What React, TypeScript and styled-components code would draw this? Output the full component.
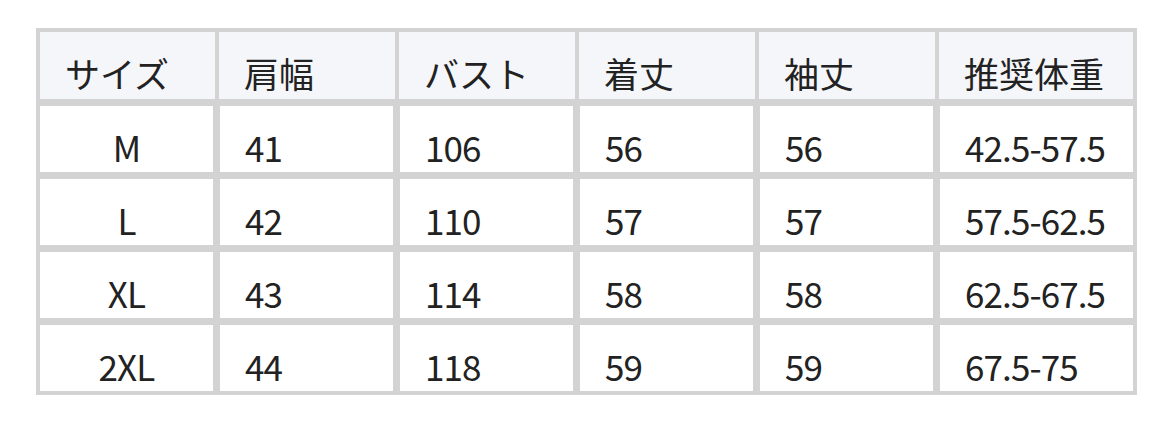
import React from 'react';
import styled, { createGlobalStyle } from 'styled-components';

const GlobalStyle = createGlobalStyle`
  html, body {
    margin: 0;
    padding: 0;
    background: #ffffff;
  }
  body {
    font-family: "Noto Sans CJK JP", "Noto Sans", sans-serif;
  }
`;

const Page = styled.div`
  padding: 28px 0 0 36px;
`;

const Table = styled.div`
  display: grid;
  grid-template-columns: repeat(5, 173px) 193px;
  grid-auto-rows: 66px;
  grid-template-rows: 67px;
  gap: 7px;
  padding: 4px;
  width: fit-content;
  background: #d3d3d3;
`;

const Cell = styled.div<{ $head?: boolean; $center?: boolean }>`
  padding: 16px 25px 0;
  font-size: 35px;
  line-height: 50px;
  color: #222222;
  white-space: nowrap;
  letter-spacing: ${p => (p.$head ? '0' : '-0.9px')};
  text-align: ${p => (p.$center ? 'center' : 'left')};
  background: ${p => (p.$head ? '#f5f6fa' : '#ffffff')};
  ${p =>
    p.$head &&
    `
    margin: 0 -2px 0 -1px;
    &:first-child { margin-left: 0; }
    &:nth-child(6) { margin-right: 0; }
  `}
`;

const headers = ['サイズ', '肩幅', 'バスト', '着丈', '袖丈', '推奨体重'];

const rows = [
  ['M', '41', '106', '56', '56', '42.5-57.5'],
  ['L', '42', '110', '57', '57', '57.5-62.5'],
  ['XL', '43', '114', '58', '58', '62.5-67.5'],
  ['2XL', '44', '118', '59', '59', '67.5-75']
];

const App: React.FC = () => (
  <>
    <GlobalStyle />
    <Page>
      <Table>
        {headers.map(h => (
          <Cell key={h} $head>
            {h}
          </Cell>
        ))}
        {rows.map(row =>
          row.map((v, i) => (
            <Cell key={row[0] + i} $center={i === 0}>
              {v}
            </Cell>
          ))
        )}
      </Table>
    </Page>
  </>
);

export default App;
